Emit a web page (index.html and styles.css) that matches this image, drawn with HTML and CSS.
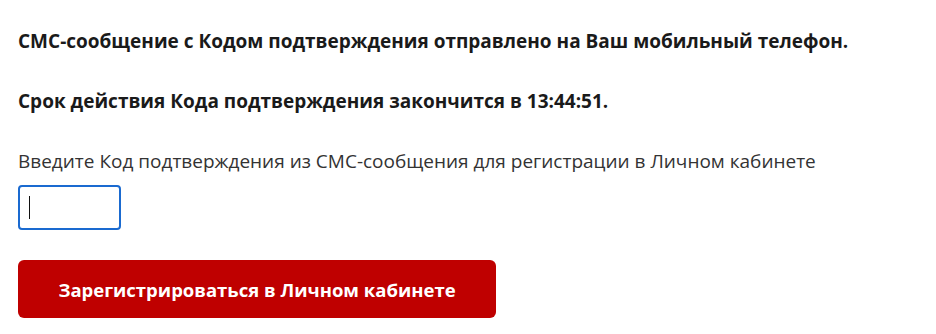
FILE: index.html
```html
<!DOCTYPE html>
<html lang="ru">
<head>
<meta charset="utf-8">
<link rel="stylesheet" href="styles.css">
</head>
<body>
<main class="page">
  <p class="notice">СМС-сообщение с Кодом подтверждения отправлено на Ваш мобильный телефон.</p>
  <p class="notice notice-expire">Срок действия Кода подтверждения закончится в 13:44:51.</p>
  <form class="code-form">
    <label class="code-label" for="code">Введите Код подтверждения из СМС-сообщения для регистрации в Личном кабинете</label>
    <div class="code-input"><span class="caret"></span></div>
    <button type="button" class="submit">Зарегистрироваться в Личном кабинете</button>
  </form>
</main>
</body>
</html>
```

FILE: styles.css
```css
html, body {
  margin: 0;
  background: #ffffff;
}
.page {
  padding: 28px 18px 0 18px;
  font-family: "Open Sans", "Noto Sans", sans-serif;
  color: #1a1a1a;
}
.notice {
  margin: 0;
  font-size: 19px;
  font-weight: 700;
  line-height: 26px;
  white-space: nowrap;
}
.notice-expire {
  margin-top: 34px;
}
.code-form {
  display: flex;
  flex-direction: column;
  align-items: flex-start;
  margin-top: 34px;
}
.code-label {
  font-size: 19px;
  line-height: 26px;
  color: #333333;
  white-space: nowrap;
}
.code-input {
  box-sizing: border-box;
  width: 103px;
  height: 45px;
  margin-top: 11px;
  border: 2px solid #1a6ad0;
  border-radius: 4px;
  display: flex;
  align-items: center;
  padding-left: 9px;
}
.caret {
  width: 1px;
  height: 23px;
  background: #111;
}
.submit {
  box-sizing: border-box;
  width: 478px;
  height: 58px;
  margin-top: 30px;
  border: none;
  border-radius: 6px;
  background: #bf0000;
  color: #ffffff;
  font-family: "Open Sans", "Noto Sans", sans-serif;
  font-size: 18.5px;
  font-weight: 700;
  padding: 0;
}
```
